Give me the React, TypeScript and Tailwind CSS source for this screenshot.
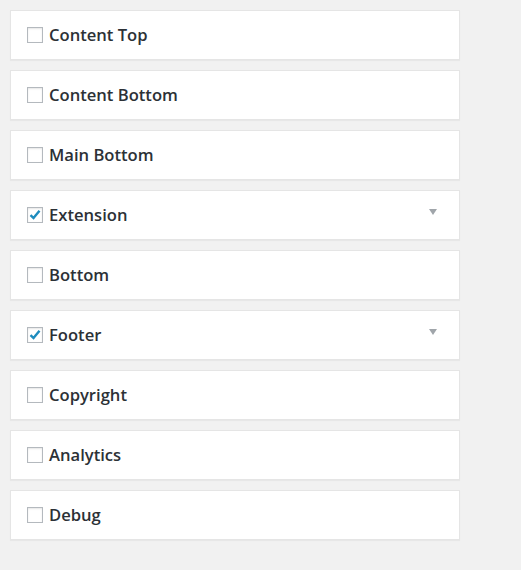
const items = [
  { label: "Content Top", checked: false },
  { label: "Content Bottom", checked: false },
  { label: "Main Bottom", checked: false },
  { label: "Extension", checked: true },
  { label: "Bottom", checked: false },
  { label: "Footer", checked: true },
  { label: "Copyright", checked: false },
  { label: "Analytics", checked: false },
  { label: "Debug", checked: false },
];

const Check = ({ checked }: { checked: boolean }) => (
  <span className="w-4 h-4 border border-[#b4b9be] bg-white shadow-[inset_0_1px_2px_rgba(0,0,0,0.1)] flex items-center justify-center shrink-0 overflow-visible">
    {checked && (
      <svg width="14" height="14" viewBox="0 0 14 14" className="shrink-0">
        <path d="M2.5 7.2l3 2.9 6-7.4" fill="none" stroke="#1e8cbe" strokeWidth="2.4" strokeLinejoin="miter" />
      </svg>
    )}
  </span>
);

export default function App() {
  return (
    <div className="min-h-[570px] bg-[#f1f1f1] pt-[10px] pl-[10px] w-[521px]" style={{ fontFamily: '"Open Sans", sans-serif' }}>
      <div className="flex flex-col gap-[10px] w-[450px]">
        {items.map((it) => (
          <div
            key={it.label}
            className="h-[50px] bg-white border border-[#e5e5e5] shadow-[0_1px_1px_rgba(0,0,0,0.04)] flex items-center pl-4 pr-[22px]"
          >
            <Check checked={it.checked} />
            <span className="ml-[6px] text-[16.6px] font-semibold text-[#2c3136] leading-none">{it.label}</span>
            {it.checked && (
              <span className="ml-auto mb-[6px] w-0 h-0 border-l-[4px] border-r-[4px] border-t-[6px] border-l-transparent border-r-transparent border-t-[#a0a5aa]" />
            )}
          </div>
        ))}
      </div>
    </div>
  );
}
